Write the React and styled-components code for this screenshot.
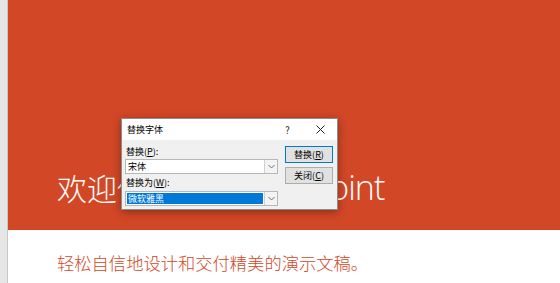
import React from "react";
import styled, { createGlobalStyle } from "styled-components";

const GlobalStyle = createGlobalStyle`
  html, body {
    margin: 0;
    padding: 0;
    width: 560px;
    height: 283px;
    overflow: hidden;
    background: #ffffff;
  }
`;

const Page = styled.div`
  position: relative;
  display: flex;
  width: 560px;
  height: 283px;
  font-family: "Noto Sans CJK SC", sans-serif;
`;

const Gutter = styled.div`
  width: 7px;
  background: #e6e6e6;
  border-right: 1px solid #c6c6c6;
`;

const Slide = styled.div`
  flex: 1;
  display: flex;
  flex-direction: column;
`;

const Header = styled.div`
  height: 230px;
  background: #d24726;
  display: flex;
  flex-direction: column;
  justify-content: flex-end;
  padding: 0 0 24px 49px;
  box-sizing: border-box;
`;

const Title = styled.h1`
  margin: 0;
  font-family: "Noto Sans CJK SC", sans-serif;
  font-weight: 300;
  font-size: 30px;
  line-height: 38px;
  color: #ffffff;
  white-space: nowrap;
`;

const Latin = styled.span`
  font-family: "Open Sans", "Noto Sans CJK SC", sans-serif;
  font-weight: 300;
  font-size: 34px;
  letter-spacing: -1px;
  margin-left: 42px;
`;

const Body = styled.div`
  padding: 22px 0 0 49px;
`;

const Subtitle = styled.p`
  margin: 0;
  font-family: "Noto Sans CJK SC", sans-serif;
  font-weight: 300;
  font-size: 17.3px;
  line-height: 22px;
  color: #d24726;
  white-space: nowrap;
`;

const Dialog = styled.div`
  position: absolute;
  left: 121px;
  top: 118px;
  width: 217px;
  height: 92px;
  box-sizing: border-box;
  border: 1px solid #8c8c8c;
  background: #f0f0f0;
  box-shadow: 0 2px 8px rgba(0, 0, 0, 0.35);
  display: flex;
  flex-direction: column;
  font-size: 9px;
  color: #000000;
`;

const TitleBar = styled.div`
  height: 21px;
  background: #ffffff;
  display: flex;
  align-items: center;
  padding: 0 0 0 5px;
`;

const TitleText = styled.span`
  flex: 1;
  font-size: 9px;
`;

const TitleButton = styled.span`
  width: 33px;
  display: flex;
  justify-content: center;
  align-items: center;
  font-size: 9.5px;
  color: #222;
`;

const Content = styled.div`
  flex: 1;
  display: flex;
  padding: 5px 4px 0 3px;
  gap: 7px;
`;

const Fields = styled.div`
  width: 153px;
  display: flex;
  flex-direction: column;
`;

const Label = styled.div`
  height: 14px;
  line-height: 14px;
  padding-left: 1px;
  margin-bottom: ${(p) => p.$gap || 0}px;
`;

const Combo = styled.div`
  height: ${(p) => p.$h}px;
  box-sizing: border-box;
  border: 1px solid #b7b7b7;
  background: #ffffff;
  display: flex;
  margin-bottom: ${(p) => p.$after || 0}px;
`;

const ComboText = styled.div`
  flex: 1;
  margin: 1px;
  padding-left: 1px;
  display: flex;
  align-items: center;
  font-size: 9px;
  background: ${(p) => (p.$selected ? "#0078d7" : "transparent")};
  color: ${(p) => (p.$selected ? "#ffffff" : "#000000")};
`;

const ComboButton = styled.div`
  width: 12px;
  border-left: 1px solid #cfcfcf;
  background: #f3f3f3;
  display: flex;
  align-items: center;
  justify-content: center;
`;

const Buttons = styled.div`
  display: flex;
  flex-direction: column;
  gap: 4px;
  padding-top: 1px;
`;

const Button = styled.div`
  width: 48px;
  height: 17px;
  box-sizing: border-box;
  border: 1px solid ${(p) => (p.$primary ? "#0078d7" : "#adadad")};
  background: #e1e1e1;
  display: flex;
  align-items: center;
  justify-content: center;
  font-size: 9px;
`;

const Chevron = () => (
  <svg width="7" height="5" viewBox="0 0 7 5">
    <path d="M0.5 1 L3.5 4 L6.5 1" fill="none" stroke="#707070" strokeWidth="1" />
  </svg>
);

const CloseIcon = () => (
  <svg width="9" height="9" viewBox="0 0 9 9">
    <path d="M0.5 0.5 L8.5 8.5 M8.5 0.5 L0.5 8.5" stroke="#222" strokeWidth="1" />
  </svg>
);

const App = () => {
  return (
    <>
      <GlobalStyle />
      <Page>
        <Gutter />
        <Slide>
          <Header>
            <Title>
              欢迎使用<Latin>PowerPoint</Latin>
            </Title>
          </Header>
          <Body>
            <Subtitle>轻松自信地设计和交付精美的演示文稿。</Subtitle>
          </Body>
        </Slide>

        <Dialog>
          <TitleBar>
            <TitleText>替换字体</TitleText>
            <TitleButton>?</TitleButton>
            <TitleButton>
              <CloseIcon />
            </TitleButton>
          </TitleBar>
          <Content>
            <Fields>
              <Label $gap={0}>
                替换(<u>P</u>):
              </Label>
              <Combo $h={15} $after={2}>
                <ComboText>宋体</ComboText>
                <ComboButton>
                  <Chevron />
                </ComboButton>
              </Combo>
              <Label $gap={1}>
                替换为(<u>W</u>):
              </Label>
              <Combo $h={15}>
                <ComboText $selected>微软雅黑</ComboText>
                <ComboButton>
                  <Chevron />
                </ComboButton>
              </Combo>
            </Fields>
            <Buttons>
              <Button $primary>
                替换(<u>R</u>)
              </Button>
              <Button>
                关闭(<u>C</u>)
              </Button>
            </Buttons>
          </Content>
        </Dialog>
      </Page>
    </>
  );
};

export default App;
